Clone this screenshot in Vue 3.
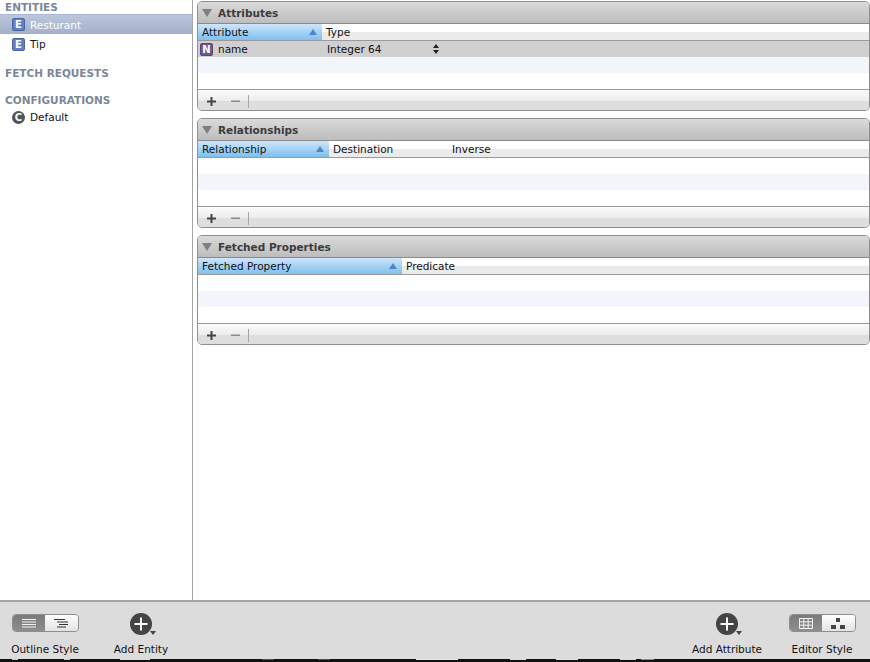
<script setup>
const entities = [
  { name: "Resturant", selected: true },
  { name: "Tip", selected: false },
];

const panels = [
  {
    title: "Attributes",
    columns: [
      { label: "Attribute", width: 124, sorted: true },
      { label: "Type", width: 0 },
    ],
    hasAttribute: true,
  },
  {
    title: "Relationships",
    columns: [
      { label: "Relationship", width: 131, sorted: true },
      { label: "Destination", width: 119 },
      { label: "Inverse", width: 0 },
    ],
  },
  {
    title: "Fetched Properties",
    columns: [
      { label: "Fetched Property", width: 204, sorted: true },
      { label: "Predicate", width: 0 },
    ],
  },
];

// scraps of the dock that show under the window
const dockBits = [
  { left: 12, width: 6, color: "#c9c9c9" },
  { left: 64, width: 6, color: "#c9c9c9" },
  { left: 120, width: 30, color: "#e8dcb8" },
  { left: 262, width: 12, color: "#6b4a3a" },
  { left: 318, width: 12, color: "#2f4fa8" },
  { left: 416, width: 42, color: "#e6e6e6" },
  { left: 510, width: 16, color: "#dddddd" },
  { left: 556, width: 22, color: "#e2e2e2" },
  { left: 620, width: 16, color: "#d8d8d8" },
  { left: 641, width: 13, color: "#e8696b" },
];
</script>

<template>
  <div class="window">
    <div class="main">
      <aside class="sidebar">
        <div class="group-title first">ENTITIES</div>
        <div v-for="e in entities" :key="e.name" class="item" :class="{ selected: e.selected }">
          <span class="badge entity">E</span>
          <span>{{ e.name }}</span>
        </div>
        <div class="group-title fetch">FETCH REQUESTS</div>
        <div class="group-title config">CONFIGURATIONS</div>
        <div class="item">
          <span class="badge conf">C</span>
          <span>Default</span>
        </div>
      </aside>

      <section class="editor">
        <div v-for="p in panels" :key="p.title" class="panel">
          <div class="panel-head">
            <svg class="triangle" width="10" height="8" viewBox="0 0 10 8"><path d="M0 0h10L5 8z" fill="#7f7f7f" /></svg>
            <span>{{ p.title }}</span>
          </div>
          <div class="columns">
            <div
              v-for="c in p.columns"
              :key="c.label"
              class="col"
              :class="{ sorted: c.sorted, grow: !c.width }"
              :style="c.width ? { width: c.width + 'px' } : null"
            >
              <span>{{ c.label }}</span>
              <svg v-if="c.sorted" class="sort" width="8" height="6" viewBox="0 0 8 6"><path d="M4 0l4 6H0z" fill="#4c86c6" /></svg>
            </div>
          </div>
          <div class="row" :class="{ chosen: p.hasAttribute }">
            <template v-if="p.hasAttribute">
              <span class="badge attr">N</span>
              <span class="attr-name">name</span>
              <span class="attr-type">Integer 64</span>
              <svg class="stepper" width="6" height="10" viewBox="0 0 6 10">
                <path d="M3 0l3 4H0zM3 10L0 6h6z" fill="#222" />
              </svg>
            </template>
          </div>
          <div class="row alt"></div>
          <div class="row"></div>
          <div class="panel-foot">
            <svg class="tool plus" width="9" height="9" viewBox="0 0 9 9"><path d="M3.5 0h2v3.5H9v2H5.5V9h-2V5.5H0v-2h3.5z" fill="#444" /></svg>
            <svg class="tool minus" width="9" height="9" viewBox="0 0 9 9"><path d="M0 3.5h9v1.6H0z" fill="#8a8a8a" /></svg>
            <span class="divider"></span>
          </div>
        </div>
      </section>
    </div>

    <footer class="toolbar">
      <div class="tool-block outline">
        <div class="segmented">
          <div class="seg on">
            <svg width="16" height="11" viewBox="0 0 16 11"><path d="M1 1.5h14M1 4h14M1 6.5h14M1 9h14" stroke="#f4f4f4" fill="none" /></svg>
          </div>
          <div class="seg">
            <svg width="16" height="11" viewBox="0 0 16 11"><path d="M1 1.5h11M4 4h11M6 6.5h9M4 9h9" stroke="#333" fill="none" /></svg>
          </div>
        </div>
        <span class="tool-label">Outline Style</span>
      </div>
      <div class="tool-block add-entity">
        <div class="add">
          <svg width="30" height="24" viewBox="0 0 30 24">
            <circle cx="12" cy="12" r="11" fill="#444" />
            <path d="M11 5.5h2V11h5.500v2H13v5.500h-2V13H5.500v-2H11z" fill="#fff" />
            <path d="M21 19h6l-3 4z" fill="#444" />
          </svg>
        </div>
        <span class="tool-label">Add Entity</span>
      </div>
      <div class="spacer"></div>
      <div class="tool-block add-attr">
        <div class="add">
          <svg width="30" height="24" viewBox="0 0 30 24">
            <circle cx="12" cy="12" r="11" fill="#444" />
            <path d="M11 5.500h2V11h5.500v2H13v5.500h-2V13H5.500v-2H11z" fill="#fff" />
            <path d="M21 19h6l-3 4z" fill="#444" />
          </svg>
        </div>
        <span class="tool-label">Add Attribute</span>
      </div>
      <div class="tool-block editor-style">
        <div class="segmented">
          <div class="seg on">
            <svg width="14" height="11" viewBox="0 0 14 11"><path d="M.5.500h13v10H.5zM.5 3.800h13M.5 7.200h13M4.800.500v10M9.200.500v10" stroke="#f4f4f4" fill="none" /></svg>
          </div>
          <div class="seg">
            <svg width="14" height="11" viewBox="0 0 14 11"><path d="M5 0h4v4H5zM0 7h5v4H0zM9 7h5v4H9z" fill="#444" /></svg>
          </div>
        </div>
        <span class="tool-label">Editor Style</span>
      </div>
    </footer>

    <div class="dock">
      <span
        v-for="b in dockBits"
        :key="b.left"
        class="dock-bit"
        :style="{ left: b.left + 'px', width: b.width + 'px', background: b.color }"
      ></span>
    </div>
  </div>
</template>

<style>
html,
body {
  margin: 0;
  background: #fff;
}
</style>

<style scoped>
.window {
  width: 870px;
  height: 662px;
  display: flex;
  flex-direction: column;
  overflow: hidden;
  font-family: "DejaVu Sans", "Liberation Sans", sans-serif;
  font-size: 10.5px;
  color: #111;
}

.main {
  flex: 1;
  display: flex;
  min-height: 0;
}

.sidebar {
  width: 192px;
  flex: none;
  border-right: 1px solid #a5a5a5;
  background: #fff;
}

.group-title {
  padding-left: 5px;
  font-weight: bold;
  font-size: 10.5px;
  line-height: 14px;
  color: #7b8797;
}

.first {
  margin-top: 0;
}

.fetch {
  margin-top: 12px;
}

.config {
  margin-top: 13px;
}

.item {
  height: 20px;
  display: flex;
  align-items: center;
  gap: 5px;
  padding-left: 12px;
}

.item.selected {
  color: #fff;
  background: linear-gradient(#bcc7dc, #a3b0c9);
  border-top: 1px solid #a9b6cf;
  box-sizing: border-box;
}

.badge {
  width: 13px;
  height: 13px;
  flex: none;
  display: flex;
  align-items: center;
  justify-content: center;
  box-sizing: border-box;
  color: #fff;
  font-size: 10px;
  font-weight: bold;
}

.entity {
  background: #6580bf;
  border: 1px solid #4a64a6;
  border-radius: 2px;
}

.conf {
  background: #4e5558;
  border-radius: 50%;
}

.attr {
  background: #6f5a8e;
  border: 1px solid #564571;
  border-radius: 2px;
}

.editor {
  flex: 1;
  min-width: 0;
  display: flex;
  flex-direction: column;
  gap: 7px;
  padding: 1px 0 0 4px;
  background: #fff;
}

.panel {
  height: 110px;
  box-sizing: border-box;
  border: 1px solid #8f8f8f;
  border-radius: 5px;
  overflow: hidden;
  background: #fff;
}

.panel-head {
  height: 21px;
  display: flex;
  align-items: center;
  gap: 6px;
  padding-left: 4px;
  font-weight: bold;
  color: #3c3c3c;
  background: linear-gradient(#dadada, #bdbdbd);
  border-bottom: 1px solid #8a8a8a;
}

.triangle {
  flex: none;
}

.columns {
  height: 16px;
  display: flex;
  background: linear-gradient(#ffffff 50%, #ebebeb 50%);
  border-bottom: 1px solid #9a9a9a;
}

.col {
  display: flex;
  align-items: center;
  justify-content: space-between;
  padding: 0 4px;
  box-sizing: border-box;
}

.col.grow {
  flex: 1;
}

.col.sorted {
  background: linear-gradient(#cfe6fa, #a5d2f5 50%, #7fc0f1);
}

.sort {
  margin-right: 1px;
}

.row {
  height: 16px;
  display: flex;
  align-items: center;
  background: #fff;
}

.row.alt {
  background: #f2f5fa;
}

.row.chosen {
  background: #d0d0d0;
  padding-left: 2px;
}

.attr-name {
  margin-left: 5px;
  width: 109px;
}

.attr-type {
  width: 106px;
}

.panel-foot {
  height: 22px;
  display: flex;
  align-items: center;
  border-top: 1px solid #9a9a9a;
  background: linear-gradient(#fbfbfb, #ececec 50%, #dedede 50%, #dedede);
}

.plus {
  margin-left: 9px;
}

.minus {
  margin-left: 15px;
}

.divider {
  width: 1px;
  height: 13px;
  margin-left: 8px;
  background: #a5a5a5;
}

.toolbar {
  height: 59px;
  flex: none;
  display: flex;
  box-sizing: border-box;
  border-top: 2px solid #a5a5a5;
  background: #dcdcdc;
}

.spacer {
  flex: 1;
}

.tool-block {
  display: flex;
  flex-direction: column;
  align-items: center;
  padding-top: 10px;
}

.tool-label {
  margin-top: 6px;
  line-height: 14px;
  white-space: nowrap;
}

.outline {
  margin-left: 11px;
  width: 68px;
}

.add-entity {
  margin-left: 34px;
  width: 56px;
}

.add-attr {
  width: 74px;
}

.editor-style {
  width: 62px;
  margin-left: 27px;
  margin-right: 17px;
}

.add {
  height: 24px;
  margin-left: 6px;
}

.segmented {
  width: 67px;
  height: 18px;
  margin: 2px 0 4px;
  display: flex;
  box-sizing: border-box;
  border: 1px solid #8e8e8e;
  border-radius: 4px;
  overflow: hidden;
}

.seg {
  flex: 1;
  display: flex;
  align-items: center;
  justify-content: center;
  background: linear-gradient(#ffffff, #e3e3e3);
}

.seg.on {
  background: linear-gradient(#7a7a7a, #8e8e8e);
}

.dock {
  position: relative;
  height: 3px;
  flex: none;
  background: #111;
}

.dock-bit {
  position: absolute;
  top: 0;
  height: 1px;
}
</style>
